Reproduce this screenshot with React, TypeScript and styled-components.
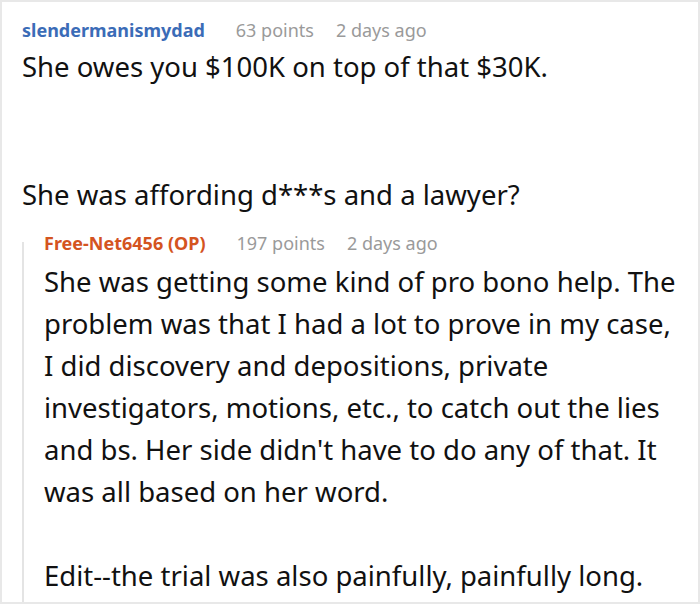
import React from "react";
import styled, { createGlobalStyle } from "styled-components";

const Global = createGlobalStyle`
  html, body { margin: 0; padding: 0; background: #fff; }
  body { font-family: "Noto Sans", "Open Sans", sans-serif; color: #111; }
`;

const Frame = styled.div`
  box-sizing: border-box;
  width: 700px;
  height: 604px;
  border: 2px solid #e8e8e8;
  padding: 15px 0 0 20px;
  overflow: hidden;
`;

const Header = styled.div`
  display: flex;
  align-items: baseline;
  font-size: 18px;
  line-height: 26px;
  white-space: nowrap;
`;

const Author = styled.span<{ $color: string }>`
  font-weight: 700;
  color: ${(p) => p.$color};
  margin-right: 31px;
`;

const Meta = styled.span`
  color: #9a9a9a;
  font-weight: 400;
  & + & { margin-left: 22px; }
`;

const Body = styled.div<{ $gap: number; $top: number }>`
  font-size: 27.5px;
  line-height: 42px;
  color: #111;
  margin-top: ${(p) => p.$top}px;
  white-space: nowrap;
  p { margin: 0; }
  p + p { margin-top: ${(p) => p.$gap}px; }
`;

const Reply = styled.div`
  position: relative;
  margin-top: 14px;
  padding-left: 22px;
  &::before {
    content: "";
    position: absolute;
    left: 0;
    top: 12px;
    bottom: -20px;
    width: 2px;
    background: #e4e4e4;
  }
`;

export default function App() {
  return (
    <>
      <Global />
      <Frame>
        <Header>
          <Author $color="#3b6cb7">slendermanismydad</Author>
          <Meta>63 points</Meta>
          <Meta>2 days ago</Meta>
        </Header>
        <Body $gap={86} $top={3}>
          <p>She owes you $100K on top of that $30K.</p>
          <p>She was affording d***s and a lawyer?</p>
        </Body>
        <Reply>
          <Header>
            <Author $color="#d4541f">Free-Net6456 (OP)</Author>
            <Meta>197 points</Meta>
            <Meta>2 days ago</Meta>
          </Header>
          <Body $gap={42} $top={5}>
            <p>
              She was getting some kind of pro bono help. The
              <br />
              problem was that I had a lot to prove in my case,
              <br />
              I did discovery and depositions, private
              <br />
              investigators, motions, etc., to catch out the lies
              <br />
              and bs. Her side didn't have to do any of that. It
              <br />
              was all based on her word.
            </p>
            <p>Edit--the trial was also painfully, painfully long.</p>
          </Body>
        </Reply>
      </Frame>
    </>
  );
}
